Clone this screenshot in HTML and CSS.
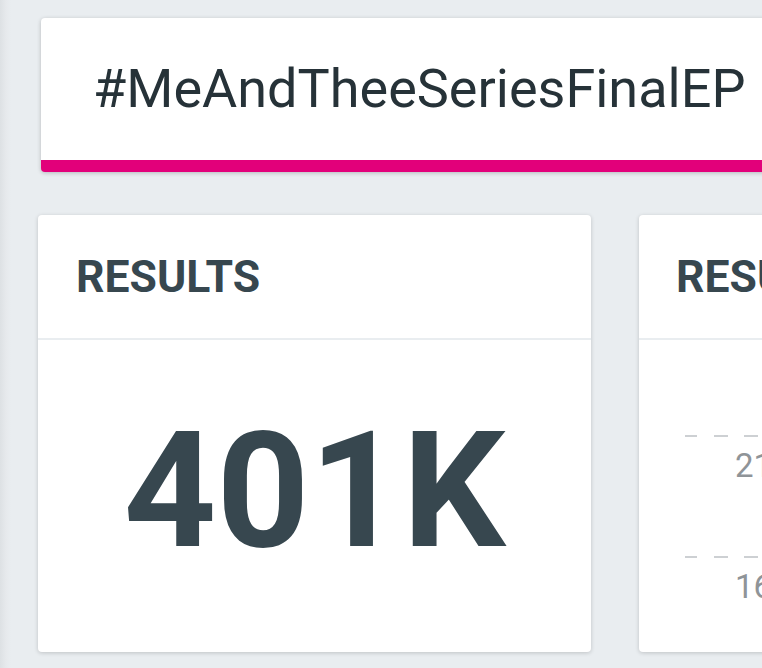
FILE: index.html
```html
<!DOCTYPE html>
<html>
<head>
<meta charset="utf-8">
<link rel="stylesheet" href="styles.css">
</head>
<body>
<div class="page">
  <div class="topic">
    <div class="topic-text">#MeAndTheeSeriesFinalEP</div>
  </div>
  <div class="row">
    <div class="card card-main">
      <div class="card-head">RESULTS</div>
      <div class="card-body big">401K</div>
    </div>
    <div class="card card-chart">
      <div class="card-head">RESULTS</div>
      <div class="chart">
        <div class="grid-line"></div>
        <div class="axis-label">21</div>
        <div class="grid-line second"></div>
        <div class="axis-label">16</div>
      </div>
    </div>
  </div>
</div>
</body>
</html>
```
FILE: styles.css
```css
html, body {
  margin: 0;
  padding: 0;
  overflow: hidden;
  width: 762px;
  height: 668px;
}
body {
  background: #e9edf0;
  font-family: Roboto, "Liberation Sans", sans-serif;
}
.page {
  height: 668px;
  background: linear-gradient(to right, #dde1e4 0px, #e6e9ec 6px, #e9edf0 11px);
  padding-top: 18px;
  box-sizing: border-box;
}
.topic {
  margin-left: 41px;
  width: 800px;
  height: 154px;
  background: #fff;
  border-bottom: 12px solid #e2007a;
  border-radius: 4px;
  box-sizing: border-box;
  box-shadow: 0 1px 4px rgba(0, 0, 0, 0.22);
  padding-left: 52px;
  padding-top: 44px;
}
.topic-text {
  font-size: 54px;
  line-height: 1;
  color: #263238;
  white-space: nowrap;
}
.row {
  display: flex;
  gap: 48px;
  margin-top: 43px;
  margin-left: 38px;
}
.card {
  background: #fff;
  border-radius: 4px;
  box-shadow: 0 1px 4px rgba(0, 0, 0, 0.18);
  height: 437px;
  flex-shrink: 0;
}
.card-main {
  width: 553px;
}
.card-chart {
  width: 300px;
}
.card-head {
  height: 123px;
  border-bottom: 2px solid #e9edf0;
  box-sizing: content-box;
  padding-left: 38px;
  font-size: 44.5px;
  font-weight: 700;
  color: #37474f;
  line-height: 125px;
  white-space: nowrap;
}
.card-chart .card-head {
  padding-left: 37px;
}
.big {
  text-align: center;
  font-size: 162px;
  font-weight: 700;
  color: #37474f;
  line-height: 1;
  padding-top: 70px;
}
.chart {
  padding-top: 95px;
  padding-left: 46px;
}
.grid-line {
  height: 0;
  border-top: 2px dashed #cfd3d6;
  width: 200px;
  border-image: repeating-linear-gradient(to right, #cdd0d3 0 14px, transparent 14px 30px) 2;
}
.grid-line.second {
  margin-top: 74px;
}
.axis-label {
  font-size: 33px;
  color: #8f9498;
  padding-left: 50px;
  margin-top: 12px;
  line-height: 1;
}
```
